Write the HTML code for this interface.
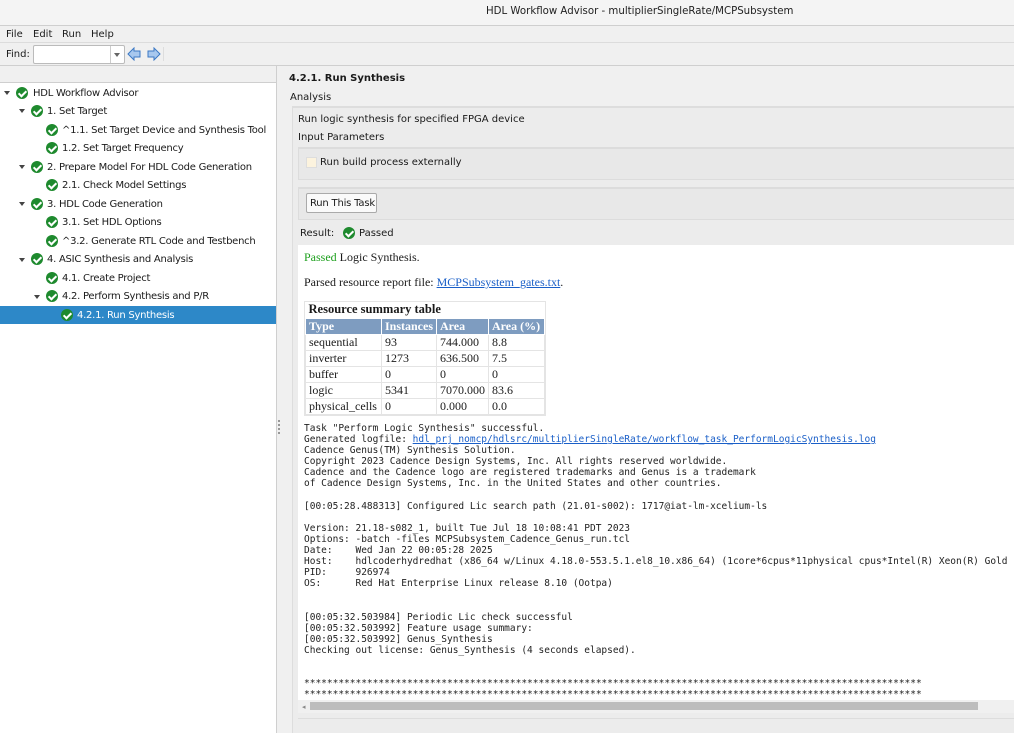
<!DOCTYPE html>
<html><head><meta charset="utf-8"><style>
*{box-sizing:border-box;margin:0;padding:0}
body{width:1014px;height:733px;overflow:hidden;background:#f0f0f0;font-family:"DejaVu Sans","Liberation Sans",sans-serif;font-size:10px;color:#1a1a1a;position:relative}
.a{position:absolute;white-space:nowrap}
.ck{position:absolute;width:12px;height:12px;border-radius:50%;background:#1e8a2e}
.ck:after{content:"";position:absolute;left:4px;top:1.5px;width:3px;height:6px;border:solid #fff;border-width:0 2px 2px 0;transform:rotate(45deg)}
.tri{position:absolute;width:0;height:0;border-left:3.5px solid transparent;border-right:3.5px solid transparent;border-top:4px solid #444}
.row{position:absolute;white-space:nowrap;letter-spacing:-0.25px}
pre.a{font-family:"DejaVu Sans Mono","Liberation Mono",monospace;font-size:9.5px;line-height:11.1px;color:#222;white-space:pre}
a{color:#1a5fc8;text-decoration:underline}
table{border-collapse:collapse;font-family:"Liberation Serif",serif;font-size:12px;table-layout:fixed;width:239px}
td,th{border:1px solid #e4e4e4;padding:0 3px;height:15.2px;text-align:left;white-space:nowrap;overflow:hidden}
th{background:#7e9cc0;color:#fff;font-weight:bold;border-color:#fff}
</style></head><body>
<div class="a" style="left:0;top:0;width:1014px;height:26px;background:#f4f4f4;border-bottom:1px solid #cfcfcf"></div>
<div class="a" style="left:486px;top:6px;font-size:10.2px;color:#222">HDL Workflow Advisor - multiplierSingleRate/MCPSubsystem</div>
<div class="a" style="left:6px;top:29px">File</div>
<div class="a" style="left:33px;top:29px">Edit</div>
<div class="a" style="left:62px;top:29px">Run</div>
<div class="a" style="left:91px;top:29px">Help</div>
<div class="a" style="left:0;top:42px;width:1014px;height:1px;background:#dcdcdc"></div>
<div class="a" style="left:6px;top:49px">Find:</div>
<div class="a" style="left:33px;top:45px;width:92px;height:19px;background:#fff;border:1px solid #bbb;border-radius:2px"></div>
<div class="a" style="left:110px;top:46px;width:1px;height:17px;background:#ccc"></div>
<div class="tri" style="left:114px;top:53px;border-top-color:#666"></div>
<svg class="a" style="left:127px;top:47px" width="34" height="14"><path d="M1 7 L7 1 V4 H13 V10 H7 V13 Z" fill="#a8c8ee" stroke="#3b78c4"/><path d="M33 7 L27 1 V4 H21 V10 H27 V13 Z" fill="#a8c8ee" stroke="#3b78c4"/></svg>
<div class="a" style="left:163px;top:47px;width:1px;height:14px;background:#ddd"></div>
<div class="a" style="left:0;top:65px;width:1014px;height:1px;background:#cfcfcf"></div>
<!-- left panel -->
<div class="a" style="left:0;top:82px;width:276px;height:651px;background:#fff;border-top:1px solid #cfcfcf"></div>
<div class="a" style="left:276px;top:66px;width:1px;height:667px;background:#cfcfcf"></div>
<div class="a" style="left:0;top:306px;width:276px;height:18px;background:#2d88c8"></div>
<div class="tri" style="left:4px;top:91px"></div><div class="ck" style="left:16px;top:87px"></div><div class="row" style="left:33px;top:88px">HDL Workflow Advisor</div>
<div class="tri" style="left:19px;top:109px"></div><div class="ck" style="left:31px;top:105px"></div><div class="row" style="left:47px;top:106px">1. Set Target</div>
<div class="ck" style="left:46px;top:124px"></div><div class="row" style="left:62px;top:125px">^1.1. Set Target Device and Synthesis Tool</div>
<div class="ck" style="left:46px;top:142px"></div><div class="row" style="left:62px;top:143px">1.2. Set Target Frequency</div>
<div class="tri" style="left:19px;top:165px"></div><div class="ck" style="left:31px;top:161px"></div><div class="row" style="left:47px;top:162px">2. Prepare Model For HDL Code Generation</div>
<div class="ck" style="left:46px;top:179px"></div><div class="row" style="left:62px;top:180px">2.1. Check Model Settings</div>
<div class="tri" style="left:19px;top:202px"></div><div class="ck" style="left:31px;top:198px"></div><div class="row" style="left:47px;top:199px">3. HDL Code Generation</div>
<div class="ck" style="left:46px;top:216px"></div><div class="row" style="left:62px;top:217px">3.1. Set HDL Options</div>
<div class="ck" style="left:46px;top:235px"></div><div class="row" style="left:62px;top:236px">^3.2. Generate RTL Code and Testbench</div>
<div class="tri" style="left:19px;top:258px"></div><div class="ck" style="left:31px;top:253px"></div><div class="row" style="left:47px;top:254px">4. ASIC Synthesis and Analysis</div>
<div class="ck" style="left:46px;top:272px"></div><div class="row" style="left:62px;top:273px">4.1. Create Project</div>
<div class="tri" style="left:34px;top:295px"></div><div class="ck" style="left:46px;top:290px"></div><div class="row" style="left:62px;top:291px">4.2. Perform Synthesis and P/R</div>
<div class="ck" style="left:61px;top:309px"></div><div class="row" style="left:77px;top:310px;color:#fff">4.2.1. Run Synthesis</div>
<div class="a" style="left:278px;top:420px;width:2px;height:14px;border-left:2px dotted #999"></div>
<!-- right -->
<div class="a" style="left:289px;top:73px;font-weight:bold">4.2.1. Run Synthesis</div>
<div class="a" style="left:290px;top:92px">Analysis</div>
<div class="a" style="left:292px;top:106px;width:722px;height:627px;background:#ececec;border-top:2px solid #ddd;border-left:1px solid #ddd"></div>
<div class="a" style="left:298px;top:114px">Run logic synthesis for specified FPGA device</div>
<div class="a" style="left:298px;top:132px">Input Parameters</div>
<div class="a" style="left:298px;top:147px;width:716px;height:33px;background:#e8e8e8;border:1px solid #dcdcdc;border-top-width:2px;border-right:none"></div>
<div class="a" style="left:306px;top:157px;width:11px;height:11px;background:#fcf3de;border:1px solid #ddd"></div>
<div class="a" style="left:320px;top:157px">Run build process externally</div>
<div class="a" style="left:298px;top:187px;width:716px;height:33px;background:#e8e8e8;border:1px solid #dcdcdc;border-top-width:2px;border-right:none"></div>
<div class="a" style="left:306px;top:193px;width:71px;height:20px;background:#fafafa;border:1px solid #aaa;border-radius:2px;padding:4px 0 0 3px;letter-spacing:-0.2px">Run This Task</div>
<div class="a" style="left:300px;top:228px">Result:</div>
<div class="ck" style="left:343px;top:227px"></div>
<div class="a" style="left:359px;top:228px">Passed</div>
<div class="a" style="left:298px;top:245px;width:716px;height:455px;background:#fff"></div>
<div class="a" style="left:304px;top:250px;font-family:'Liberation Serif',serif;font-size:12px"><span style="color:#1ea01e">Passed</span> Logic Synthesis.</div>
<div class="a" style="left:304px;top:275px;font-family:'Liberation Serif',serif;font-size:12px">Parsed resource report file: <a>MCPSubsystem_gates.txt</a>.</div>
<div class="a" style="left:304px;top:301px;border:1px solid #e4e4e4">
<table><colgroup><col style="width:76px"><col style="width:55px"><col style="width:52px"><col style="width:56px"></colgroup>
<tr><td colspan="4" style="font-weight:bold;font-size:12.5px;border:none;height:16px">Resource summary table</td></tr>
<tr><th>Type</th><th>Instances</th><th>Area</th><th>Area (%)</th></tr>
<tr><td>sequential</td><td>93</td><td>744.000</td><td>8.8</td></tr>
<tr><td>inverter</td><td>1273</td><td>636.500</td><td>7.5</td></tr>
<tr><td>buffer</td><td>0</td><td>0</td><td>0</td></tr>
<tr><td>logic</td><td>5341</td><td>7070.000</td><td>83.6</td></tr>
<tr><td>physical_cells</td><td>0</td><td>0.000</td><td>0.0</td></tr></table></div>
<pre class="a" style="left:304px;top:423px">Task "Perform Logic Synthesis" successful.
Generated logfile: <a>hdl_prj_nomcp/hdlsrc/multiplierSingleRate/workflow_task_PerformLogicSynthesis.log</a>
Cadence Genus(TM) Synthesis Solution.
Copyright 2023 Cadence Design Systems, Inc. All rights reserved worldwide.
Cadence and the Cadence logo are registered trademarks and Genus is a trademark
of Cadence Design Systems, Inc. in the United States and other countries.

[00:05:28.488313] Configured Lic search path (21.01-s002): 1717@iat-lm-xcelium-ls

Version: 21.18-s082_1, built Tue Jul 18 10:08:41 PDT 2023
Options: -batch -files MCPSubsystem_Cadence_Genus_run.tcl
Date:    Wed Jan 22 00:05:28 2025
Host:    hdlcoderhydredhat (x86_64 w/Linux 4.18.0-553.5.1.el8_10.x86_64) (1core*6cpus*11physical cpus*Intel(R) Xeon(R) Gold
PID:     926974
OS:      Red Hat Enterprise Linux release 8.10 (Ootpa)


[00:05:32.503984] Periodic Lic check successful
[00:05:32.503992] Feature usage summary:
[00:05:32.503992] Genus_Synthesis
Checking out license: Genus_Synthesis (4 seconds elapsed).


************************************************************************************************************
************************************************************************************************************</pre>
<div class="a" style="left:298px;top:700px;width:716px;height:13px;background:#f0f0f0"></div>
<div class="a" style="left:310px;top:702px;width:668px;height:8px;background:#bdbdbd"></div>
<div class="a" style="left:302px;top:703px;font-size:7px;color:#888">◂</div>
<div class="a" style="left:298px;top:718px;width:716px;height:1px;background:#ddd"></div>
</body></html>
